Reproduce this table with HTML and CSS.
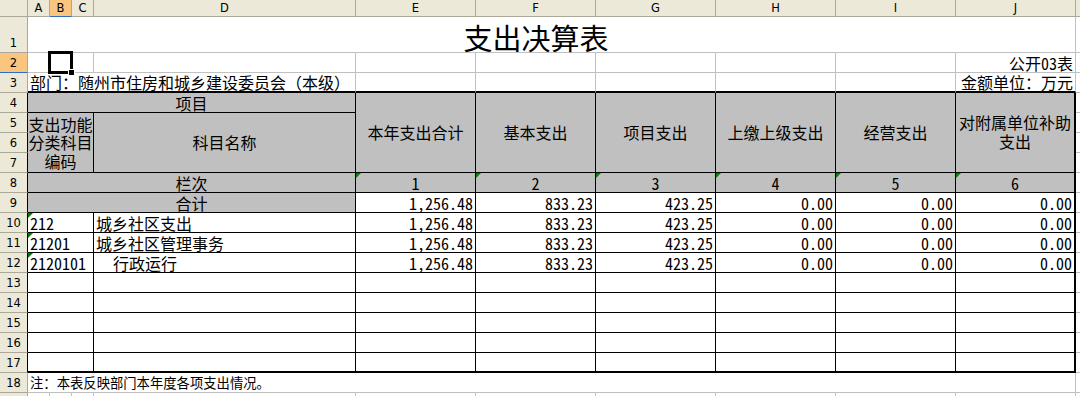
FILE: index.html
```html
<!DOCTYPE html>
<html lang="zh-CN">
<head>
<meta charset="utf-8">
<title>支出决算表</title>
<link rel="stylesheet" href="styles.css">
</head>
<body>
<div class="sheet">
  <!-- column header row -->
  <div class="c ch corner"></div>
  <div class="c ch">A</div>
  <div class="c ch sel">B</div>
  <div class="c ch">C</div>
  <div class="c ch">D</div>
  <div class="c ch">E</div>
  <div class="c ch">F</div>
  <div class="c ch">G</div>
  <div class="c ch">H</div>
  <div class="c ch">I</div>
  <div class="c ch">J</div>
  <div class="c ch"></div>

  <!-- row 1 -->
  <div class="c rh">1</div>
  <div class="c s10 title">支出决算表</div>
  <div class="c"></div>

  <!-- row 2 -->
  <div class="c rh rsel">2</div>
  <div class="c"></div>
  <div class="c"><div class="selbox"></div><div class="handle"></div></div>
  <div class="c"></div>
  <div class="c"></div>
  <div class="c"></div>
  <div class="c"></div>
  <div class="c"></div>
  <div class="c"></div>
  <div class="c"></div>
  <div class="c r">公开<span class="num">03</span>表</div>
  <div class="c"></div>

  <!-- row 3 -->
  <div class="c rh">3</div>
  <div class="c s4 tb">部门：随州市住房和城乡建设委员会（本级）</div>
  <div class="c tb"></div>
  <div class="c tb"></div>
  <div class="c tb"></div>
  <div class="c tb"></div>
  <div class="c tb"></div>
  <div class="c tb r">金额单位：万元</div>
  <div class="c"></div>

  <!-- row 4 -->
  <div class="c rh rt">4</div>
  <div class="c s4 t g m">项目</div>
  <div class="c r4 t g m mid">本年支出合计</div>
  <div class="c r4 t g m mid">基本支出</div>
  <div class="c r4 t g m mid">项目支出</div>
  <div class="c r4 t g m mid">上缴上级支出</div>
  <div class="c r4 t g m mid">经营支出</div>
  <div class="c r4 t g m mid thr lines">对附属单位补助<br>支出</div>
  <div class="c"></div>

  <!-- row 5 -->
  <div class="c rh rt">5</div>
  <div class="c s3 r3 t g m mid lines tight">支出功能<br>分类科目<br>编码</div>
  <div class="c r3 t g m mid">科目名称</div>
  <div class="c"></div>

  <!-- row 6 -->
  <div class="c rh rt">6</div>
  <div class="c"></div>

  <!-- row 7 -->
  <div class="c rh rt">7</div>
  <div class="c"></div>

  <!-- row 8 -->
  <div class="c rh rt">8</div>
  <div class="c s4 t g m">栏次</div>
  <div class="c t g m tri num">1</div>
  <div class="c t g m tri num">2</div>
  <div class="c t g m tri num">3</div>
  <div class="c t g m tri num">4</div>
  <div class="c t g m tri num">5</div>
  <div class="c t g m tri num thr">6</div>
  <div class="c"></div>

  <!-- row 9 -->
  <div class="c rh rt">9</div>
  <div class="c s4 t g m">合计</div>
  <div class="c t r num">1,256.48</div>
  <div class="c t r num">833.23</div>
  <div class="c t r num">423.25</div>
  <div class="c t r num">0.00</div>
  <div class="c t r num">0.00</div>
  <div class="c t r num thr">0.00</div>
  <div class="c"></div>

  <!-- row 10 -->
  <div class="c rh rt">10</div>
  <div class="c s3 t tri num">212</div>
  <div class="c t">城乡社区支出</div>
  <div class="c t r num">1,256.48</div>
  <div class="c t r num">833.23</div>
  <div class="c t r num">423.25</div>
  <div class="c t r num">0.00</div>
  <div class="c t r num">0.00</div>
  <div class="c t r num thr">0.00</div>
  <div class="c"></div>

  <!-- row 11 -->
  <div class="c rh rt">11</div>
  <div class="c s3 t tri num">21201</div>
  <div class="c t">城乡社区管理事务</div>
  <div class="c t r num">1,256.48</div>
  <div class="c t r num">833.23</div>
  <div class="c t r num">423.25</div>
  <div class="c t r num">0.00</div>
  <div class="c t r num">0.00</div>
  <div class="c t r num thr">0.00</div>
  <div class="c"></div>

  <!-- row 12 -->
  <div class="c rh rt">12</div>
  <div class="c s3 t tri num">2120101</div>
  <div class="c t indent">行政运行</div>
  <div class="c t r num">1,256.48</div>
  <div class="c t r num">833.23</div>
  <div class="c t r num">423.25</div>
  <div class="c t r num">0.00</div>
  <div class="c t r num">0.00</div>
  <div class="c t r num thr">0.00</div>
  <div class="c"></div>

  <!-- rows 13-16 -->
  <div class="c rh rt">13</div>
  <div class="c s3 t"></div><div class="c t"></div>
  <div class="c t"></div><div class="c t"></div><div class="c t"></div><div class="c t"></div><div class="c t"></div><div class="c t thr"></div>
  <div class="c"></div>

  <div class="c rh rt">14</div>
  <div class="c s3 t"></div><div class="c t"></div>
  <div class="c t"></div><div class="c t"></div><div class="c t"></div><div class="c t"></div><div class="c t"></div><div class="c t thr"></div>
  <div class="c"></div>

  <div class="c rh rt">15</div>
  <div class="c s3 t"></div><div class="c t"></div>
  <div class="c t"></div><div class="c t"></div><div class="c t"></div><div class="c t"></div><div class="c t"></div><div class="c t thr"></div>
  <div class="c"></div>

  <div class="c rh rt">16</div>
  <div class="c s3 t"></div><div class="c t"></div>
  <div class="c t"></div><div class="c t"></div><div class="c t"></div><div class="c t"></div><div class="c t"></div><div class="c t thr"></div>
  <div class="c"></div>

  <!-- row 17 -->
  <div class="c rh rt">17</div>
  <div class="c s3 t thb"></div><div class="c t thb"></div>
  <div class="c t thb"></div><div class="c t thb"></div><div class="c t thb"></div><div class="c t thb"></div><div class="c t thb"></div><div class="c t thb thr"></div>
  <div class="c"></div>

  <!-- row 18 -->
  <div class="c rh">18</div>
  <div class="c s10 note">注：本表反映部门本年度各项支出情况。</div>
  <div class="c"></div>

  <!-- row 19 -->
  <div class="c rh"></div>
  <div class="c"></div><div class="c"></div><div class="c"></div><div class="c"></div>
  <div class="c"></div><div class="c"></div><div class="c"></div><div class="c"></div><div class="c"></div><div class="c"></div>
  <div class="c"></div>
</div>
</body>
</html>
```

FILE: styles.css
```css
html, body {
  margin: 0;
  padding: 0;
  background: #ffffff;
}

body {
  width: 1080px;
  height: 396px;
  overflow: hidden;
}

.sheet {
  display: grid;
  grid-template-columns: 28px 22px 22px 22px 262px repeat(6, 120px) 1fr;
  grid-template-rows: 17px 36px repeat(18, 20px);
  width: 1080px;
  height: 396px;
  overflow: hidden;
  font-family: "Noto Sans CJK SC", sans-serif;
  font-size: 16px;
  color: #000;
}

.c {
  box-sizing: border-box;
  position: relative;
  display: flex;
  align-items: flex-end;
  justify-content: flex-start;
  border-right: 1px solid #c0c0c0;
  border-bottom: 1px solid #c0c0c0;
  padding: 0 2px 1px 2px;
  line-height: 16px;
  white-space: nowrap;
}

/* half-width digits, like the sheet's default font */
.num {
  font-feature-settings: "hwid" 1;
}

/* headers */
.ch {
  background: #ece9d8;
  border-right-color: #aca899;
  border-bottom-color: #aca899;
  font-family: "DejaVu Sans", sans-serif;
  font-size: 11.5px;
  line-height: 12px;
  justify-content: center;
  align-items: center;
  padding: 0;
}

.ch.sel {
  background: #f9c57f;
  border-bottom: 1px solid #316ac5;
}

.rh {
  background: #ece9d8;
  border-right-color: #aca899;
  border-bottom-color: #aca899;
  font-family: "DejaVu Sans", sans-serif;
  font-size: 11.5px;
  line-height: 12px;
  justify-content: center;
  padding: 0 0 3px 0;
}

.rh.rsel {
  background: #f9c57f;
  border-bottom-color: #316ac5;
}

.rh.rt {
  border-right-color: #000;
}

/* spans */
.s3 { grid-column: span 3; }
.s4 { grid-column: span 4; }
.s10 { grid-column: span 10; }
.r3 { grid-row: span 3; }
.r4 { grid-row: span 4; }

/* alignment */
.r { justify-content: flex-end; }
.m { justify-content: center; }
.mid { align-items: center; }
.lines {
  text-align: center;
  line-height: 19px;
}
.tight {
  padding: 0;
  line-height: 18.5px;
}
.indent { padding-left: 19px; }

/* table borders */
.t {
  border-right-color: #000;
  border-bottom-color: #000;
}
.g { background: #c0c0c0; }
.tb { border-bottom: 2px solid #000; }
.thr { border-right: 2px solid #000; }
.thb { border-bottom: 2px solid #000; }

/* number-stored-as-text marker */
.tri::before {
  content: "";
  position: absolute;
  left: 0;
  top: 0;
  border-top: 5px solid #008000;
  border-right: 5px solid transparent;
}

/* title & note */
.title {
  font-size: 29px;
  line-height: 29px;
  justify-content: center;
  padding: 0 31px 0 0;
}

.note {
  font-size: 13.33px;
  line-height: 14px;
  padding-bottom: 2px;
}

/* active cell selection */
.selbox {
  position: absolute;
  left: -2px;
  top: -2px;
  width: 25px;
  height: 23px;
  box-sizing: border-box;
  border: 3px solid #000;
  z-index: 5;
}

.handle {
  position: absolute;
  left: 18px;
  top: 16px;
  width: 7px;
  height: 7px;
  box-sizing: border-box;
  background: #000;
  border: 1px solid #fff;
  z-index: 6;
}
```
